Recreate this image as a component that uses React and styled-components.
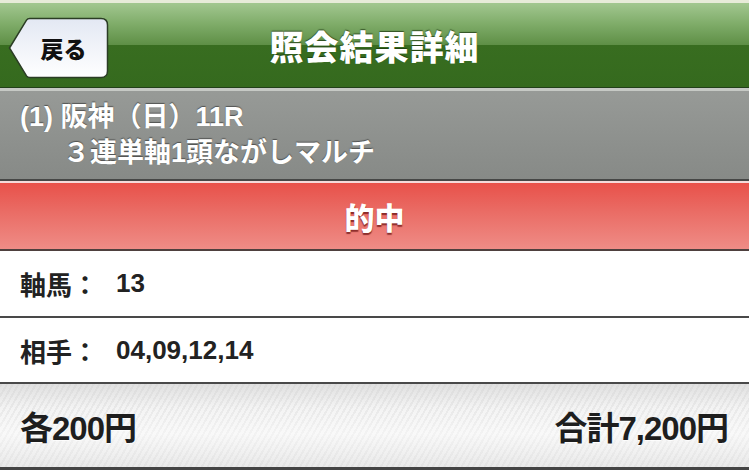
import React from "react";
import styled, { createGlobalStyle } from "styled-components";

const Global = createGlobalStyle`
  html, body { margin: 0; padding: 0; background: #ffffff; }
  body { font-family: "Liberation Sans", "Noto Sans CJK JP", sans-serif; }
`;

const Page = styled.div`
  width: 749px;
  background: #ffffff;
  padding-bottom: 3px;
`;

const TopStrip = styled.div`
  height: 3px;
  background: #e7ebd9;
`;

const Header = styled.header`
  position: relative;
  height: 84px;
  border-bottom: 1px solid #22401a;
  background: linear-gradient(
    to bottom,
    #a2c790 0%,
    #7fac69 25%,
    #5e8f46 50%,
    #386d20 50%,
    #356a1e 100%
  );
  display: flex;
  align-items: center;
  justify-content: center;
`;

const Title = styled.h1`
  margin: 0;
  font-family: "Liberation Sans", "Noto Sans CJK JP", sans-serif;
  font-weight: 900;
  font-size: 34px;
  letter-spacing: 1px;
  color: #ffffff;
  text-shadow: 0 -1px 1px rgba(20, 45, 10, 0.7);
`;

const BackButton = styled.button`
  position: absolute;
  left: 8px;
  top: 14px;
  width: 101px;
  height: 62px;
  padding: 0 0 0 10px;
  border: none;
  background: transparent;
  display: flex;
  align-items: center;
  justify-content: center;
  font-family: "Liberation Sans", "Noto Sans CJK JP", sans-serif;
  font-weight: 900;
  font-size: 23px;
  color: #111111;
  cursor: pointer;
`;

const ButtonShape = styled.svg`
  position: absolute;
  left: 0;
  top: 0;
`;

const ButtonLabel = styled.span`
  position: relative;
  text-shadow: 0 1px 0 rgba(255, 255, 255, 0.8);
`;

const InfoPanel = styled.section`
  box-sizing: border-box;
  height: 93px;
  border-top: 3px solid #c6c9c5;
  border-bottom: 2px solid #464746;
  background: linear-gradient(to bottom, #979a97 0%, #8d908d 60%, #878a87 100%);
  padding: 8px 20px;
`;

const InfoLine = styled.div`
  height: 36px;
  line-height: 36px;
  padding-left: ${(p) => p.$indent || 0}px;
  font-size: ${(p) => p.$size}px;
  font-weight: 700;
  color: #ffffff;
  white-space: nowrap;
  text-shadow: 0 -1px 1px rgba(40, 40, 40, 0.6);
`;

const ResultBar = styled.div`
  border-top: 2px solid #f4dada;
  border-bottom: 2px solid #4e403e;
  height: 66px;
  background: linear-gradient(to bottom, #e8514a 0%, #ea6d66 45%, #ef8c86 100%);
  display: flex;
  align-items: center;
  justify-content: center;
  font-size: 30px;
  font-weight: 900;
  color: #ffffff;
  text-shadow: 0 2px 1px rgba(110, 20, 20, 0.75);
`;

const Row = styled.div`
  height: ${(p) => p.$h}px;
  border-bottom: 2px solid #494949;
  display: flex;
  align-items: center;
  padding-left: 20px;
  font-size: 26px;
  font-weight: 700;
  color: #222222;
`;

const RowLabel = styled.span`
  width: 96px;
  flex: none;
`;

const Footer = styled.div`
  height: 83px;
  border-bottom: 3px solid #444444;
  display: flex;
  align-items: center;
  justify-content: space-between;
  padding: 0 21px 0 20px;
  background:
    linear-gradient(
      to bottom,
      rgba(200, 200, 200, 0.45) 0%,
      rgba(255, 255, 255, 0) 30%,
      rgba(255, 255, 255, 0.45) 60%,
      rgba(210, 210, 210, 0.3) 100%
    ),
    repeating-linear-gradient(
      -60deg,
      #f4f4f4 0px,
      #f4f4f4 3px,
      #e9e9e9 3px,
      #e9e9e9 5px
    );
`;

const Amount = styled.span`
  font-size: 33px;
  font-weight: 700;
  color: #1e1e1e;
  letter-spacing: -1px;
  text-shadow: 0 1px 0 rgba(255, 255, 255, 0.8);
`;

export default function App() {
  return (
    <Page>
      <Global />
      <TopStrip />
      <Header>
        <BackButton>
          <ButtonShape width="101" height="62" viewBox="0 0 101 62">
            <defs>
              <linearGradient id="bb" x1="0" y1="0" x2="0" y2="1">
                <stop offset="0" stopColor="#e3e8f3" />
                <stop offset="1" stopColor="#ffffff" />
              </linearGradient>
            </defs>
            <path
              d="M1.5,31 L18.5,3.2 Q19.6,1.5 21.8,1.5 L93,1.5 Q99.5,1.5 99.5,8 L99.5,54 Q99.5,60.5 93,60.5 L21.8,60.5 Q19.6,60.5 18.5,58.8 Z"
              fill="url(#bb)"
              stroke="#2b3d25"
              strokeWidth="1.5"
            />
          </ButtonShape>
          <ButtonLabel>戻る</ButtonLabel>
        </BackButton>
        <Title>照会結果詳細</Title>
      </Header>
      <InfoPanel>
        <InfoLine $size={27}>(1) 阪神（日）11R</InfoLine>
        <InfoLine $size={27} $indent={43}>３連単軸1頭ながしマルチ</InfoLine>
      </InfoPanel>
      <ResultBar>的中</ResultBar>
      <Row $h={65}>
        <RowLabel>軸馬：</RowLabel>
        <span>13</span>
      </Row>
      <Row $h={64}>
        <RowLabel>相手：</RowLabel>
        <span>04,09,12,14</span>
      </Row>
      <Footer>
        <Amount>各200円</Amount>
        <Amount>合計7,200円</Amount>
      </Footer>
    </Page>
  );
}
